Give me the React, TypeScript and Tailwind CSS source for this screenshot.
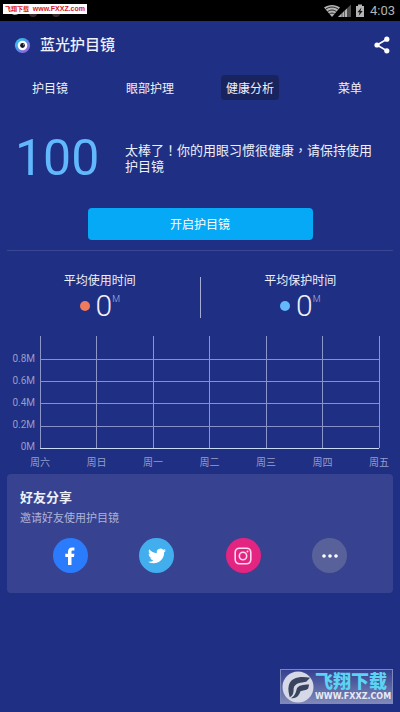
import React from "react";

const days = ["周六", "周日", "周一", "周二", "周三", "周四", "周五"];
const levels = ["0.8M", "0.6M", "0.4M", "0.2M", "0M"];
const tabs = ["护目镜", "眼部护理", "健康分析", "菜单"];

function StatusBar() {
  return (
    <div className="relative flex h-[21px] items-center justify-end bg-black pr-[5px] text-[#b4b4b4]">
      <svg className="absolute left-[9px] top-[4px]" width="60" height="14" viewBox="0 0 60 14" aria-hidden="true">
        <circle cx="6" cy="7" r="4" fill="#aaa" />
        <circle cx="24" cy="9" r="4" fill="#3a2a30" />
        <circle cx="47" cy="9" r="4" fill="#3a2a30" />
      </svg>
      <div className="absolute left-[3px] top-[4px] flex h-[10px] w-[84px] items-center justify-between whitespace-nowrap bg-white px-[2px] text-[#d8141c]">
        <span className="font-['Noto_Sans_CJK_SC',sans-serif] text-[6px] font-bold leading-[10px]">飞翔下载</span>
        <span className="font-['Liberation_Sans',sans-serif] text-[7px] font-bold leading-[10px]">www.FXXZ.com</span>
      </div>
      <svg width="42" height="14" viewBox="0 0 42 14" aria-hidden="true">
        <path d="M8 13 L0 3.600 C4.500 0 11.500 0 16 3.600 Z" fill="#b4b4b4" />
        <path d="M1.500 5.300 C5.500 2.300 10.500 2.300 14.500 5.300 M3.500 7.700 C6.500 5.500 9.500 5.500 12.500 7.700 M5.300 9.900 C7 8.800 9 8.800 10.700 9.900" fill="none" stroke="#000" strokeWidth="0.800" />
        <path d="M14 13 L27 0.500 V13 Z" fill="#4e4e4e" />
        <path d="M14 13 L23 4.400 V13 Z" fill="#b4b4b4" />
        <path d="M18 8 V13 M20.500 6 V13" stroke="#222" strokeWidth="0.600" />
        <path d="M32 2 H34 V0.500 H38 V2 H40 V13 H32 Z" fill="#b4b4b4" />
        <path d="M37.500 3.500 L33.500 8.200 H35.700 L34.700 11.700 L38.700 6.900 H36.400 Z" fill="#111" />
      </svg>
      <span className="ml-[4px] font-[Roboto,sans-serif] text-[13px] leading-[21px]">4:03</span>
    </div>
  );
}

function Header() {
  return (
    <header className="flex h-12 items-center pl-[14px] pr-[10px]">
      <svg width="17" height="17" viewBox="0 0 17 17" aria-hidden="true">
        <defs>
          <linearGradient id="iris" x1="0" y1="0" x2="1" y2="1">
            <stop offset="0" stopColor="#20dfe8" />
            <stop offset="0.500" stopColor="#5a8be8" />
            <stop offset="1" stopColor="#b052d8" />
          </linearGradient>
        </defs>
        <circle cx="8.500" cy="8.500" r="7.600" fill="url(#iris)" />
        <circle cx="8.500" cy="8.500" r="4.800" fill="#fff" />
        <circle cx="8.500" cy="8.500" r="2.400" fill="#111525" />
        <circle cx="9.400" cy="7.700" r="0.500" fill="#fff" />
      </svg>
      <h1 className="ml-[9px] flex-1 text-[15px] font-medium leading-5">蓝光护目镜</h1>
      <button aria-label="分享" className="text-white">
        <svg width="16" height="18" viewBox="0 0 16 18" fill="currentColor" aria-hidden="true">
          <path d="M12.800 3.200 L3 9 L12.800 14.800" fill="none" stroke="currentColor" strokeWidth="1.600" />
          <circle cx="12.800" cy="3.200" r="2.600" />
          <circle cx="3" cy="9" r="2.600" />
          <circle cx="12.800" cy="14.800" r="2.600" />
        </svg>
      </button>
    </header>
  );
}

function Stat({ label, dot }: { label: string; dot: string }) {
  return (
    <div className="flex flex-1 flex-col items-center">
      <span className="text-[12px] leading-4">{label}</span>
      <div className="mt-[3px] flex h-[28px] items-center font-[Roboto,sans-serif]">
        <span className={`mr-[6px] size-[10px] rounded-full ${dot}`} />
        <span className="text-[30px] font-light leading-7">0</span>
        <span className="self-start text-[9px] font-light leading-[14px] text-[#b5bade]">M</span>
      </div>
    </div>
  );
}

function Chart() {
  return (
    <section className="mt-4 pl-[6px] pr-[21px] font-[Roboto,'Noto_Sans_CJK_SC',sans-serif] text-[10px] text-[#979dca]">
      <div className="flex h-[113px]">
        <div className="flex w-[34px] flex-col items-end pr-[5px] pt-4">
          {levels.map((l) => (
            <span key={l} className="h-[22px] shrink-0 leading-[14px]">{l}</span>
          ))}
        </div>
        <svg className="h-[113px] min-w-0 flex-1 overflow-visible" shapeRendering="crispEdges" role="img" aria-label="每周时间">
          {days.map((d, i) => (
            <line key={d} x1={`${(i * 100) / 6}%`} x2={`${(i * 100) / 6}%`} y1="0" y2="112" stroke="#8c96cb" />
          ))}
          {[23, 45, 67, 90].map((y) => (
            <line key={y} x1="0" x2="100%" y1={y} y2={y} stroke="#8791c8" />
          ))}
          <line x1="0" x2="100%" y1="112" y2="112" stroke="#c9dcf5" />
        </svg>
      </div>
      <div className="-mr-[10px] ml-[24px] mt-[6px] flex justify-between">
        {days.map((d) => (
          <span key={d} className="w-5 text-center leading-4">{d}</span>
        ))}
      </div>
    </section>
  );
}

function ShareCard() {
  const circle = "flex size-[35px] items-center justify-center rounded-full text-white";
  return (
    <section className="mx-[7px] mt-[3px] rounded bg-[#374390] px-[13px] pb-5 pt-[14px]">
      <h2 className="text-[13px] font-bold leading-5">好友分享</h2>
      <p className="mt-px text-[11px] leading-5 text-[#adb2d8]">邀请好友使用护目镜</p>
      <div className="mx-[7px] mt-[9px] grid grid-cols-4 justify-items-center">
        <button aria-label="Facebook" className={`${circle} bg-[#2b7bfd]`}>
          <svg width="20" height="20" viewBox="0 0 20 20" fill="currentColor" aria-hidden="true">
            <path d="M8 19 V11 H5.300 V7.700 H8 V5.700 C8 2.800 9.600 1.400 12.200 1.400 H14.400 V4.600 H12.900 C11.900 4.600 11.500 5.100 11.500 6 V7.700 H14.400 L14 11 H11.500 V19 Z" />
          </svg>
        </button>
        <button aria-label="Twitter" className={`${circle} bg-[#42aeed]`}>
          <svg width="18" height="18" viewBox="0 0 24 24" fill="currentColor" aria-hidden="true">
            <path d="M23.950 4.570a10 10 0 0 1-2.820.770 4.960 4.960 0 0 0 2.160-2.720c-.950.550-2 .950-3.130 1.180a4.920 4.920 0 0 0-8.380 4.480C7.690 8.090 4.070 6.130 1.640 3.160a4.820 4.820 0 0 0-.670 2.480c0 1.710.870 3.210 2.190 4.100a4.900 4.900 0 0 1-2.230-.620v.060a4.920 4.920 0 0 0 3.950 4.830 5 5 0 0 1-2.210.080 4.940 4.940 0 0 0 4.600 3.420A9.870 9.870 0 0 1 0 19.540a13.990 13.990 0 0 0 7.550 2.210c9.050 0 14-7.500 14-13.980 0-.210 0-.420-.020-.630a9.940 9.940 0 0 0 2.460-2.550z" />
          </svg>
        </button>
        <button aria-label="Instagram" className={`${circle} bg-[#e32481]`}>
          <svg width="18" height="18" viewBox="0 0 18 18" fill="none" stroke="#ffd9ee" strokeWidth="1.600" aria-hidden="true">
            <rect x="1.200" y="1.200" width="15.600" height="15.600" rx="4.200" />
            <circle cx="9" cy="9" r="3.700" />
            <circle cx="13.500" cy="4.600" r="1" fill="#ffd9ee" stroke="none" />
          </svg>
        </button>
        <button aria-label="更多" className={`${circle} bg-[#58619a]`}>
          <svg width="16" height="4" viewBox="0 0 16 4" fill="currentColor" aria-hidden="true">
            <circle cx="2" cy="2" r="1.800" />
            <circle cx="8" cy="2" r="1.800" />
            <circle cx="14" cy="2" r="1.800" />
          </svg>
        </button>
      </div>
    </section>
  );
}

function SiteBadge() {
  return (
    <div className="absolute bottom-[8px] right-[7px] flex h-[35px] w-[113px] items-center border border-[#7d87bd] bg-linear-to-b from-[#35408f] to-[#8088b8] pl-px">
      <svg className="shrink-0" width="32" height="32" viewBox="0 0 33 33" aria-hidden="true">
        <circle cx="16.500" cy="16.500" r="16" fill="#d5d8e6" />
        <path d="M29 7 C20 5 9 6 7 15 C6 19 7 23 8 27 C12 25 12 21 12 18 C13 12 20 12 25 11 Z" fill="#39445f" />
        <path d="M28 14 C22 14 16 15 15 19 C14 23 13 26 9 28 C16 29 18 24 19 21 C21 20 25 20 27 18 Z" fill="#39445f" />
      </svg>
      <div className="ml-px flex flex-1 flex-col items-start whitespace-nowrap">
        <span className="text-[18px] font-black leading-5 text-[#5cd3f2]">飞翔下载</span>
        <span className="font-['DejaVu_Sans',sans-serif] text-[8px] font-bold leading-[10px] text-[#e8ebf5]">WWW.FXXZ.COM</span>
      </div>
    </div>
  );
}

export default function App() {
  return (
    <main className="relative min-h-screen bg-[#1f2f83] font-[Roboto,'Noto_Sans_CJK_SC',sans-serif] text-[#eef0fa]">
      <StatusBar />
      <Header />
      <nav className="mt-[6px] grid grid-cols-4 justify-items-center">
        {tabs.map((t) => (
          <button key={t} className={`h-[25px] rounded px-[5px] pt-[3px] text-[12px] leading-[22px] ${t === "健康分析" ? "bg-[#19245f]" : ""}`}>
            {t}
          </button>
        ))}
      </nav>
      <section className="mt-[33px] flex items-center pl-[15px] pr-5">
        <span className="w-[110px] shrink-0 text-[50px] leading-[50px] text-[#62b8fc]">100</span>
        <p className="font-['Noto_Sans_CJK_TC',sans-serif] text-[13px] leading-4">
          太棒了！你的用眼习惯很健康，请保持使用护目镜
        </p>
      </section>
      <div className="mt-[25px] px-[7px]">
        <button className="mx-auto block h-8 w-[225px] rounded bg-[#05a9f5] pt-px text-[12px] leading-8 text-white">开启护目镜</button>
        <hr className="mt-[10px] border-[#3b4794]" />
      </div>
      <section className="mt-[22px] flex">
        <Stat label="平均使用时间" dot="bg-[#f07a5c]" />
        <div className="mt-1 h-[41px] w-px bg-[#a5acd6]" />
        <Stat label="平均保护时间" dot="bg-[#64b9fc]" />
      </section>
      <Chart />
      <ShareCard />
      <SiteBadge />
    </main>
  );
}
